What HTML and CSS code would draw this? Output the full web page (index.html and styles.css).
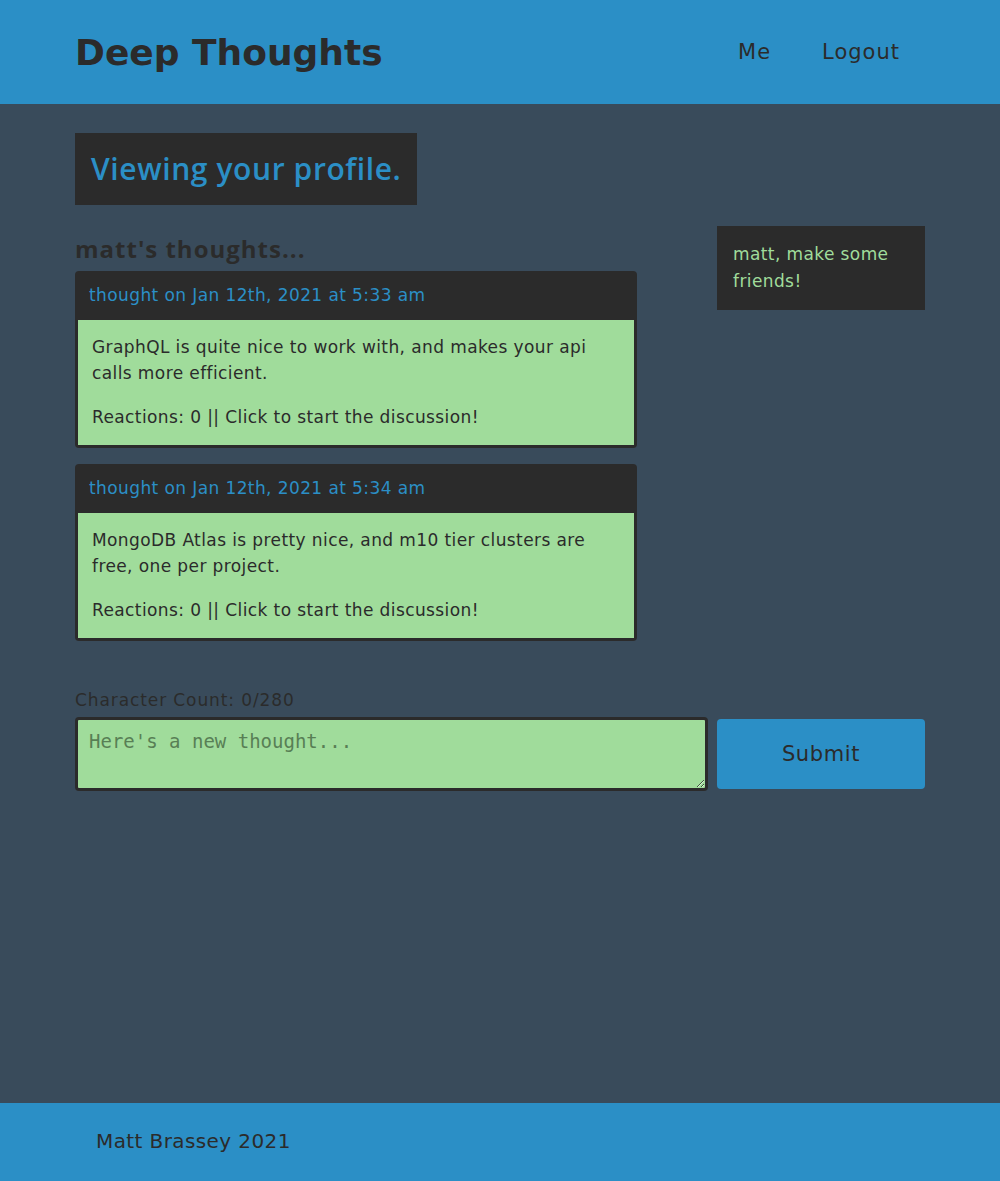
FILE: index.html
```html
<!DOCTYPE html>
<html lang="en">
<head>
<meta charset="utf-8">
<title>Deep Thoughts</title>
<link rel="stylesheet" href="styles.css">
</head>
<body>
<header class="site-header">
  <div class="container header-row">
    <h1 class="brand">Deep Thoughts</h1>
    <nav class="nav">
      <a class="nav-link" href="#">Me</a>
      <a class="nav-link" href="#">Logout</a>
    </nav>
  </div>
</header>
<main class="main">
  <div class="container">
    <h2 class="profile-banner">Viewing your profile.</h2>
    <div class="profile-row">
      <section class="thoughts">
        <h3 class="thoughts-title">matt's thoughts...</h3>
        <article class="card">
          <p class="card-header">thought on Jan 12th, 2021 at 5:33 am</p>
          <div class="card-body">
            <p>GraphQL is quite nice to work with, and makes your api calls more efficient.</p>
            <p class="reactions">Reactions: 0 || Click to start the discussion!</p>
          </div>
        </article>
        <article class="card">
          <p class="card-header">thought on Jan 12th, 2021 at 5:34 am</p>
          <div class="card-body">
            <p>MongoDB Atlas is pretty nice, and m10 tier clusters are free, one per project.</p>
            <p class="reactions">Reactions: 0 || Click to start the discussion!</p>
          </div>
        </article>
      </section>
      <aside class="friends">
        <p>matt, make some friends!</p>
      </aside>
    </div>
    <div class="form-area">
      <p class="char-count">Character Count: 0/280</p>
      <form class="thought-form">
        <textarea class="thought-input" placeholder="Here's a new thought..."></textarea>
        <button class="submit-btn" type="submit">Submit</button>
      </form>
    </div>
  </div>
</main>
<footer class="site-footer">
  <div class="container footer-inner">Matt Brassey 2021</div>
</footer>
</body>
</html>
```

FILE: styles.css
```css
* { box-sizing: border-box; }
html, body { margin: 0; padding: 0; }
body {
  min-height: 100vh;
  display: flex;
  flex-direction: column;
  background: #394b5b;
  color: #2b2b2b;
  font-family: "DejaVu Sans", sans-serif;
}
.container {
  width: 850px;
  margin: 0 auto;
}
.site-header {
  background: #2b8fc6;
  height: 104px;
}
.header-row {
  height: 104px;
  display: flex;
  align-items: center;
  justify-content: space-between;
}
.brand {
  margin: 0;
  font-family: "DejaVu Sans", sans-serif;
  font-weight: bold;
  font-size: 36px;
  letter-spacing: 0;
  color: #2b2b2b;
}
.nav { display: flex; gap: 51px; padding-right: 25px; }
.nav-link {
  color: #2b2b2b;
  text-decoration: none;
  font-size: 21px;
  letter-spacing: 1px;
  font-family: "DejaVu Sans", sans-serif;
}
.main { flex: 1; padding-top: 29px; }
.profile-banner {
  display: inline-block;
  margin: 0;
  background: #2b2b2b;
  color: #2b8fc6;
  font-family: "Open Sans", sans-serif;
  font-weight: 600;
  font-size: 30px;
  letter-spacing: 0.6px;
  line-height: 40px;
  padding: 16px 16px;
}
.profile-row {
  display: flex;
  justify-content: space-between;
  align-items: flex-start;
  margin-top: 21px;
}
.thoughts { width: 562px; }
.thoughts-title {
  margin: 7px 0 6px;
  font-family: "Open Sans", sans-serif;
  font-weight: 700;
  font-size: 24px;
  letter-spacing: 1px;
  line-height: 32px;
  color: #2b2b2b;
}
.card {
  background: #2b2b2b;
  border-radius: 4px;
  padding: 0 3px 3px;
  margin-bottom: 16px;
}
.card-header {
  margin: 0;
  color: #2b8fc6;
  font-size: 17px;
  letter-spacing: 0.4px;
  height: 49px;
  line-height: 49px;
  padding-left: 11px;
}
.card-body {
  background: #a0dc9b;
  padding: 14px 14px 15px;
  font-size: 17px;
  letter-spacing: 0.4px;
  line-height: 26px;
  color: #2b2b2b;
}
.card-body p { margin: 0; }
.card-body .reactions { margin-top: 18px; }
.friends {
  width: 208px;
  background: #2b2b2b;
  color: #a0dc9b;
  padding: 15px 16px;
  font-size: 17px;
  letter-spacing: 0.4px;
  line-height: 27px;
}
.friends p { margin: 0; }
.form-area { margin-top: 33px; }
.char-count {
  margin: 0 0 7px;
  font-size: 17px;
  letter-spacing: 0.9px;
  line-height: 20px;
  color: #2b2b2b;
}
.thought-form {
  display: flex;
  gap: 9px;
  align-items: center;
}
.thought-input {
  width: 633px;
  height: 74px;
  background: #a0dc9b;
  border: 3px solid #2b2b2b;
  border-radius: 4px;
  padding: 10px 11px;
  font-family: "DejaVu Sans Mono", monospace;
  font-size: 19px;
  color: #2b2b2b;
}
.thought-input::placeholder { color: #587f55; }
.submit-btn {
  width: 208px;
  height: 70px;
  background: #2b8fc6;
  border: none;
  border-radius: 4px;
  color: #2b2b2b;
  font-family: "DejaVu Sans", sans-serif;
  font-size: 21px;
  letter-spacing: 0.6px;
}
.site-footer {
  background: #2b8fc6;
  height: 78px;
}
.footer-inner {
  height: 78px;
  display: flex;
  align-items: center;
  padding-left: 21px;
  padding-bottom: 3px;
  font-size: 20px;
  letter-spacing: 0.4px;
  color: #2b2b2b;
}
```
